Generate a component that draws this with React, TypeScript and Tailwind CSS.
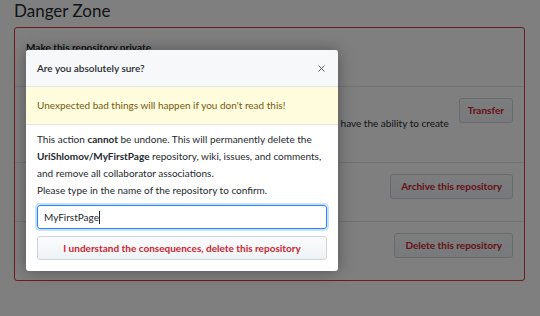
import { X } from 'lucide-react'

const font = { fontFamily: 'Lato, "Noto Sans", Arial, sans-serif' }

function Btn({ label, narrow }: { label: string; narrow?: boolean }) {
  return (
    <button
      className={`h-[25px] ${
        narrow ? 'px-[8px]' : 'px-[10px]'
      } rounded-[3px] border border-[#d1d5da] bg-gradient-to-b from-[#fafbfc] to-[#eff3f6] text-[10px] font-bold text-[#cb2431] whitespace-nowrap`}
    >
      {label}
    </button>
  )
}

function Row({
  title,
  desc,
  action,
  narrow,
  first,
}: {
  title: string
  desc: string
  action?: string
  narrow?: boolean
  first?: boolean
}) {
  return (
    <div
      className={`flex items-start gap-[8px] px-[11px] pt-[11px] pb-[13px] ${
        first ? '' : 'border-t border-[#e1e4e8]'
      }`}
    >
      <div className="flex-1 text-[10px] leading-[17px] text-[#24292e]">
        <div className="font-bold">{title}</div>
        <div>{desc}</div>
      </div>
      {action && <Btn label={action} narrow={narrow} />}
    </div>
  )
}

export default function App() {
  return (
    <div className="relative w-[540px] h-[316px] overflow-hidden bg-white" style={font}>
      {/* Settings page under the dialog */}
      <div className="pl-[14px] pr-[15px]">
        <h2 className="text-[17px] leading-[22px] text-[#24292e]">Danger Zone</h2>
        <div className="mt-[5px] border border-[#d73a49] rounded-[3px]">
          <Row
            first
            title="Make this repository private"
            desc="Hide this repository from the public."
          />
          <Row
            title="Transfer ownership"
            desc="Transfer this repository to another user or to an organization where you have the ability to create repositories."
            action="Transfer"
            narrow
          />
          <Row
            title="Archive this repository"
            desc="Mark this repository as archived and read-only."
            action="Archive this repository"
          />
          <Row
            title="Delete this repository"
            desc="Once you delete a repository, there is no going back."
            action="Delete this repository"
          />
        </div>
      </div>

      {/* Backdrop */}
      <div className="absolute inset-0 bg-black/50" />

      {/* Confirm dialog */}
      <div className="absolute left-[26px] top-[50px] w-[312px] bg-white rounded-[3px] shadow-[0_0_16px_rgba(0,0,0,0.35)] overflow-hidden text-[#24292e]">
        <div className="h-[37px] flex items-center justify-between pl-[11px] pr-[11px] bg-[#f6f8fa] border-b border-[#e1e4e8]">
          <span className="text-[10px] font-semibold">Are you absolutely sure?</span>
          <X size={11} strokeWidth={2} className="text-[#444d56]" />
        </div>
        <div className="h-[38px] flex items-center px-[11px] bg-[#fffbdd] border-b border-[#e1e4e8] text-[10px] text-[#735c0f]">
          Unexpected bad things will happen if you don&apos;t read this!
        </div>
        <div className="px-[11px] pt-[6px] pb-[11px] text-[10px] leading-[17px]">
          <p>
            This action <strong>cannot</strong> be undone. This will permanently delete the{' '}
            <strong>UriShlomov/MyFirstPage</strong> repository, wiki, issues, and comments, and
            remove all collaborator associations.
          </p>
          <p>Please type in the name of the repository to confirm.</p>
          <div className="mt-[6px] h-[24px] flex items-center px-[6px] rounded-[3px] border border-[#2188ff] shadow-[0_0_0_2px_rgba(3,102,214,0.2)] text-[10px]">
            MyFirstPage
            <span className="w-px h-[13px] bg-[#24292e]" />
          </div>
          <button className="mt-[7px] w-full h-[24px] rounded-[3px] border border-[#d1d5da] bg-gradient-to-b from-[#fafbfc] to-[#eff3f6] text-[10px] font-bold text-[#cb2431]">
            I understand the consequences, delete this repository
          </button>
        </div>
      </div>
    </div>
  )
}
